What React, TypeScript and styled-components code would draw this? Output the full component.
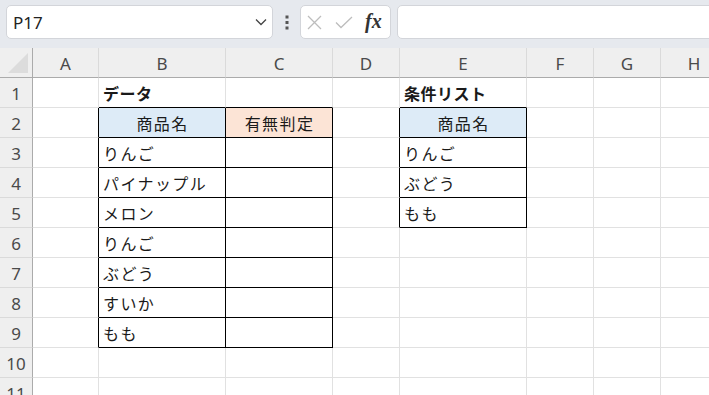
import React from "react";
import styled, { createGlobalStyle } from "styled-components";

const GlobalStyle = createGlobalStyle`
  html, body { margin: 0; padding: 0; background: #ffffff; }
  body { font-family: "Noto Sans", "Noto Sans CJK JP", sans-serif; }
  #root { width: 709px; height: 395px; overflow: hidden; }
`;

const Page = styled.div`
  width: 709px;
  height: 395px;
  overflow: hidden;
  display: flex;
  flex-direction: column;
  background: #ffffff;
`;

const TopBar = styled.div`
  flex: 0 0 48px;
  height: 48px;
  box-sizing: border-box;
  background: #e6e9ee;
  display: flex;
  align-items: flex-start;
  padding: 5px 0 0 6px;
  overflow: hidden;
`;

const NameBox = styled.div`
  flex: 0 0 267px;
  width: 267px;
  height: 34px;
  box-sizing: border-box;
  background: #ffffff;
  border: 1px solid #d3d5da;
  border-radius: 5px;
  display: flex;
  align-items: center;
  justify-content: space-between;
  padding: 0 5px 0 6px;
  font-family: "Noto Sans", sans-serif;
  font-size: 17px;
  color: #222;
`;

const DotsWrap = styled.div`
  flex: 0 0 27px;
  height: 34px;
  display: flex;
  align-items: center;
  justify-content: center;
`;

const FormulaButtons = styled.div`
  flex: 0 0 91px;
  height: 34px;
  box-sizing: border-box;
  background: #ffffff;
  border: 1px solid #d3d5da;
  border-radius: 5px;
  display: flex;
  align-items: center;
  padding: 0 0 0 6px;
  gap: 13px;
`;

const FxText = styled.span`
  font-family: "Liberation Serif", "DejaVu Serif", serif;
  font-style: italic;
  font-weight: 700;
  font-size: 20px;
  color: #333;
  margin-left: -1px;
  line-height: 1;
  padding-bottom: 2px;
`;

const FormulaInput = styled.div`
  flex: 0 0 340px;
  margin-left: 6px;
  height: 34px;
  box-sizing: border-box;
  background: #ffffff;
  border: 1px solid #d3d5da;
  border-radius: 5px;
`;

const COL_WIDTHS = [33, 66, 127, 107, 67, 127, 67, 67, 67];
const HEADER_H = 30;
const ROW_H = 30;
const ROW_COUNT = 11;

const Sheet = styled.div`
  display: grid;
  grid-template-columns: ${COL_WIDTHS.map((w) => `${w}px`).join(" ")};
  grid-template-rows: ${HEADER_H}px repeat(${ROW_COUNT}, ${ROW_H}px);
  width: max-content;
`;

const Corner = styled.div`
  box-sizing: border-box;
  background: #efefef;
  border-right: 1px solid #ababab;
  border-bottom: 1px solid #ababab;
  display: flex;
  align-items: flex-end;
  justify-content: flex-end;
  padding: 0 4px 4px 0;
`;

const CornerTriangle = styled.div`
  width: 0;
  height: 0;
  border-left: 20px solid transparent;
  border-bottom: 20px solid #dcdcdc;
`;

const ColHeader = styled.div`
  box-sizing: border-box;
  background: #efefef;
  border-right: 1px solid #dadada;
  border-bottom: 1px solid #ababab;
  display: flex;
  align-items: center;
  justify-content: center;
  font-family: "Noto Sans", sans-serif;
  font-size: 17px;
  color: #4a4a4a;
  padding-top: 1px;
`;

const RowHeader = styled.div`
  box-sizing: border-box;
  background: #efefef;
  border-right: 1px solid #ababab;
  border-bottom: 1px solid #dadada;
  display: flex;
  align-items: center;
  justify-content: center;
  font-family: "Noto Sans", sans-serif;
  font-size: 17px;
  color: #4a4a4a;
  padding-top: 1px;
`;

const Cell = styled.div<{
  $right: boolean;
  $bottom: boolean;
  $bg?: string;
  $center?: boolean;
  $bold?: boolean;
}>`
  box-sizing: border-box;
  background: ${(p) => p.$bg || "#ffffff"};
  border-right: 1px solid ${(p) => (p.$right ? "#000000" : "#e1e1e1")};
  border-bottom: 1px solid ${(p) => (p.$bottom ? "#000000" : "#e1e1e1")};
  display: flex;
  align-items: center;
  justify-content: ${(p) => (p.$center ? "center" : "flex-start")};
  padding: ${(p) => (p.$center ? "0 0 0 1px" : "0 0 0 4px")};
  font-family: "Noto Sans CJK JP", "Noto Sans", sans-serif;
  font-size: 16px;
  font-weight: ${(p) => (p.$bold ? 700 : 400)};
  letter-spacing: ${(p) => (p.$bold ? "0.5px" : "1.4px")};
  color: #1a1a1a;
  white-space: nowrap;
  overflow: hidden;
`;

type CellSpec = { text: string; bg?: string; center?: boolean; bold?: boolean };

const BLUE = "#ddebf7";
const ORANGE = "#fce4d6";
const COLS = ["A", "B", "C", "D", "E", "F", "G", "H"];

const data: Record<string, CellSpec> = {
  B1: { text: "データ", bold: true },
  E1: { text: "条件リスト", bold: true },
  B2: { text: "商品名", bg: BLUE, center: true },
  C2: { text: "有無判定", bg: ORANGE, center: true },
  E2: { text: "商品名", bg: BLUE, center: true },
  B3: { text: "りんご" },
  B4: { text: "パイナップル" },
  B5: { text: "メロン" },
  B6: { text: "りんご" },
  B7: { text: "ぶどう" },
  B8: { text: "すいか" },
  B9: { text: "もも" },
  E3: { text: "りんご" },
  E4: { text: "ぶどう" },
  E5: { text: "もも" },
};

// table ranges: [colStart, colEnd, rowStart, rowEnd] (col index 0 = A)
const TABLES: [number, number, number, number][] = [
  [1, 2, 2, 9],
  [4, 4, 2, 5],
];

const inTable = (c: number, r: number) =>
  TABLES.some(([c0, c1, r0, r1]) => c >= c0 && c <= c1 && r >= r0 && r <= r1);

const Dots = () => (
  <svg width="4" height="15" viewBox="0 0 4 15">
    <rect x="0.5" y="0.5" width="3" height="3" fill="#555" />
    <rect x="0.5" y="6" width="3" height="3" fill="#555" />
    <rect x="0.5" y="11.5" width="3" height="3" fill="#555" />
  </svg>
);

const Chevron = () => (
  <svg width="12" height="8" viewBox="0 0 12 8">
    <path d="M1 1.5 L6 6.5 L11 1.5" fill="none" stroke="#444" strokeWidth="1.3" />
  </svg>
);

const CrossIcon = () => (
  <svg width="15" height="15" viewBox="0 0 15 15">
    <path d="M1 1 L14 14 M14 1 L1 14" fill="none" stroke="#bdbdbd" strokeWidth="1.3" />
  </svg>
);

const CheckIcon = () => (
  <svg width="18" height="13" viewBox="0 0 18 13">
    <path d="M1 6.5 L6 11.5 L17 1" fill="none" stroke="#bdbdbd" strokeWidth="1.3" />
  </svg>
);

export default function App() {
  const cells: React.ReactNode[] = [];
  cells.push(
    <Corner key="corner">
      <CornerTriangle />
    </Corner>
  );
  COLS.forEach((c) => cells.push(<ColHeader key={`h-${c}`}>{c}</ColHeader>));
  for (let r = 1; r <= ROW_COUNT; r++) {
    cells.push(<RowHeader key={`r-${r}`}>{r}</RowHeader>);
    COLS.forEach((c, ci) => {
      const spec = data[`${c}${r}`];
      const right = inTable(ci, r) || inTable(ci + 1, r);
      const bottom = inTable(ci, r) || inTable(ci, r + 1);
      cells.push(
        <Cell
          key={`${c}${r}`}
          $right={right}
          $bottom={bottom}
          $bg={spec?.bg}
          $center={spec?.center}
          $bold={spec?.bold}
        >
          {spec?.text}
        </Cell>
      );
    });
  }

  return (
    <>
      <GlobalStyle />
      <Page>
        <TopBar>
          <NameBox>
            <span>P17</span>
            <Chevron />
          </NameBox>
          <DotsWrap>
            <Dots />
          </DotsWrap>
          <FormulaButtons>
            <CrossIcon />
            <CheckIcon />
            <FxText>fx</FxText>
          </FormulaButtons>
          <FormulaInput />
        </TopBar>
        <Sheet>{cells}</Sheet>
      </Page>
    </>
  );
}
